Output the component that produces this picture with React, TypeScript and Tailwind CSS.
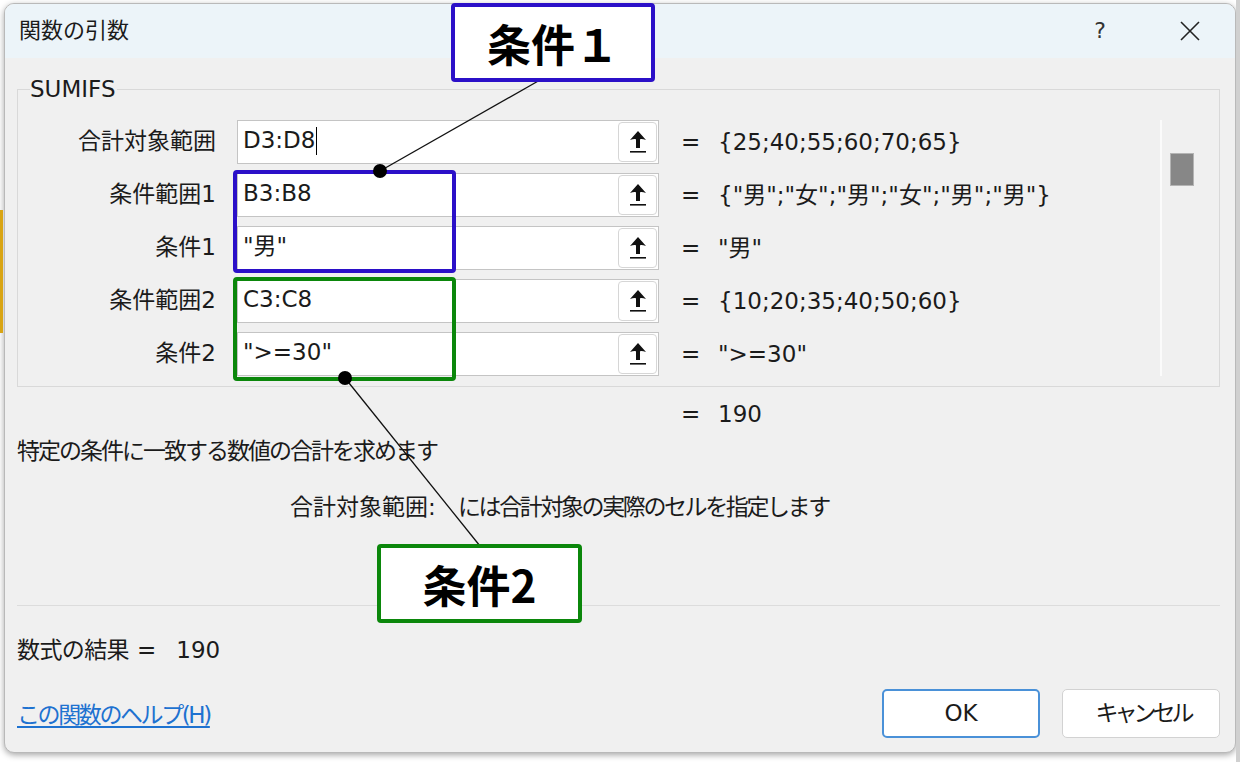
import React from "react";

const FONT = "font-[family-name:'DejaVu_Sans','Noto_Sans_CJK_JP',sans-serif]";
const TXT = "text-[23px] leading-none text-[#1b1b1b]";

const UploadIcon = () => (
  <svg width="18" height="24" viewBox="0 0 18 24">
    <path d="M9 1 L17 10 Q13 8.6 11 9.2 L11 18 L7 18 L7 9.2 Q5 8.6 1 10 Z" fill="#111" />
    <rect x="1" y="21" width="16" height="1.6" fill="#111" />
  </svg>
);

type RowProps = { label: string; value: string; result: string; cursor?: boolean };

function Row({ label, value, result, cursor }: RowProps) {
  return (
    <div className="flex items-center h-[44px]">
      <div className={`w-[198px] text-right pb-[2px] ${TXT}`}>{label}</div>
      <div className="ml-[21px] w-[422px] h-[44px] bg-white border border-[#c4c4c4] flex items-center">
        <div className={`flex-1 pl-[5px] pb-[3px] flex items-center ${TXT}`}>
          <span>{value}</span>
          {cursor && <span className="ml-[1px] w-[1px] h-[28px] bg-black" />}
        </div>
        <div className="w-[39px] h-[40px] mr-[1px] bg-white border border-[#d6d6d6] rounded-[4px] flex items-center justify-center">
          <UploadIcon />
        </div>
      </div>
      <div className={`ml-[22px] w-[37px] ${TXT}`}>=</div>
      <div className={`whitespace-nowrap ${TXT}`}>{result}</div>
    </div>
  );
}

export default function App() {
  return (
    <div className={`relative w-[1240px] h-[762px] overflow-hidden bg-white ${FONT}`}>
      {/* spreadsheet background hints */}
      <div className="absolute left-0 top-[210px] w-[3px] h-[123px] bg-[#d9a514]" />
      <div className="absolute right-0 top-0 w-[4px] h-full bg-[#d0d0d0]" />

      <div className="pt-[3px] pl-[4px]">
        <div className="w-[1232px] h-[750px] rounded-[10px] border border-[#b9b9b9] bg-[#f0f0f0] shadow-[0_2px_6px_rgba(0,0,0,0.35)] flex flex-col overflow-hidden">
          {/* title bar */}
          <div className="h-[54px] bg-[#ecf4f9] flex items-center pl-[14px] pr-[34px]">
            <div className="text-[22px] leading-none text-[#1b1b1b]">関数の引数</div>
            <div className="ml-auto flex items-center">
              <span className="text-[22px] leading-none text-[#333]">?</span>
              <svg className="ml-[73px]" width="22" height="22" viewBox="0 0 22 22">
                <path d="M2 2 L20 20 M20 2 L2 20" stroke="#222" strokeWidth="1.6" />
              </svg>
            </div>
          </div>

          {/* body */}
          <div className="flex-1 flex flex-col pl-[12px] pr-[15px]">
            {/* group box */}
            <div className="relative mt-[31px] border border-[#d9d9d9] flex pt-[30px] pb-[10px]">
              <span className="absolute left-[12px] top-[-13px] bg-[#f0f0f0] pr-[1px] text-[23px] leading-[24px] text-[#1b1b1b]">
                SUMIFS
              </span>
              <div className="flex-1 flex flex-col gap-[9px]">
                <Row label="合計対象範囲" value="D3:D8" result="{25;40;55;60;70;65}" cursor />
                <Row label="条件範囲1" value="B3:B8" result={'{"男";"女";"男";"女";"男";"男"}'} />
                <Row label="条件1" value={'"男"'} result={'"男"'} />
                <Row label="条件範囲2" value="C3:C8" result="{10;20;35;40;50;60}" />
                <Row label="条件2" value={'">=30"'} result={'">=30"'} />
              </div>
              <div className="w-[59px] flex">
                <div className="border-l-2 border-[#fbfbfb] h-full">
                  <div className="ml-[8px] mt-[33px] w-[24px] h-[33px] bg-[#878787] border border-[#b4b4b4]" />
                </div>
              </div>
            </div>

            <div className={`mt-[13px] ml-[664px] flex items-center h-[28px] ${TXT}`}>
              <span className="w-[37px]">=</span>
              <span>190</span>
            </div>

            <div className={`mt-[9px] h-[28px] flex items-center ${TXT}`}>
              <span className="tracking-[-2px]">特定の条件に一致する数値の合計を求めます</span>
            </div>

            <div className={`mt-[28px] ml-[273px] h-[28px] flex items-center ${TXT}`}>
              <span className="w-[168px]">合計対象範囲:</span>
              <span className="tracking-[-2.4px]">には合計対象の実際のセルを指定します</span>
            </div>

            <div className="mt-[84px] h-[1px] bg-[#dcdcdc]" />

            <div className={`mt-[30px] h-[28px] flex items-center ${TXT}`}>
              <span className="tracking-[-0.6px]">数式の結果</span>
              <span className="ml-[8px]">=</span>
              <span className="ml-[20px]">190</span>
            </div>

            <div className="mt-[25px] flex items-start">
              <a className="mt-[14px] text-[23px] leading-[24px] tracking-[-2.4px] text-[#1e72d0] underline underline-offset-[3px]" href="#">
                この関数のヘルプ(H)
              </a>
              <div className="ml-auto flex gap-[22px]">
                <div className={`w-[158px] h-[49px] bg-white border-2 border-[#4a91d8] rounded-[5px] flex items-center justify-center ${TXT}`}>
                  OK
                </div>
                <div className={`w-[158px] h-[49px] bg-white border border-[#d2d2d2] rounded-[5px] flex items-center justify-center ${TXT}`}>
                  <span className="tracking-[-4px] pl-[4px]">キャンセル</span>
                </div>
              </div>
            </div>
          </div>
        </div>
      </div>

      {/* annotations */}
      <div className="absolute left-[233px] top-[170px] w-[223px] h-[103px] border-4 border-[#2b10c8] rounded-[4px]" />
      <div className="absolute left-[233px] top-[277px] w-[223px] h-[104px] border-4 border-[#0b870b] rounded-[4px]" />
      <svg className="absolute inset-0 pointer-events-none" width="1240" height="762">
        <line x1="540" y1="80" x2="380" y2="171" stroke="#111" strokeWidth="1.3" />
        <line x1="345" y1="378" x2="480" y2="546" stroke="#111" strokeWidth="1.3" />
        <circle cx="380" cy="171" r="7" fill="#000" />
        <circle cx="345" cy="378" r="7" fill="#000" />
      </svg>
      <div className="absolute left-[451px] top-[3px] w-[204px] h-[79px] bg-white border-4 border-[#2b10c8] rounded-[4px] flex items-center justify-center font-[family-name:'Noto_Sans_CJK_JP',sans-serif] font-bold text-[44px] leading-none text-black">
        条件１
      </div>
      <div className="absolute left-[377px] top-[544px] w-[205px] h-[79px] bg-white border-4 border-[#0b870b] rounded-[4px] flex items-center justify-center font-[family-name:'Noto_Sans_CJK_JP',sans-serif] font-bold text-[44px] leading-none text-black">
        条件2
      </div>
    </div>
  );
}
